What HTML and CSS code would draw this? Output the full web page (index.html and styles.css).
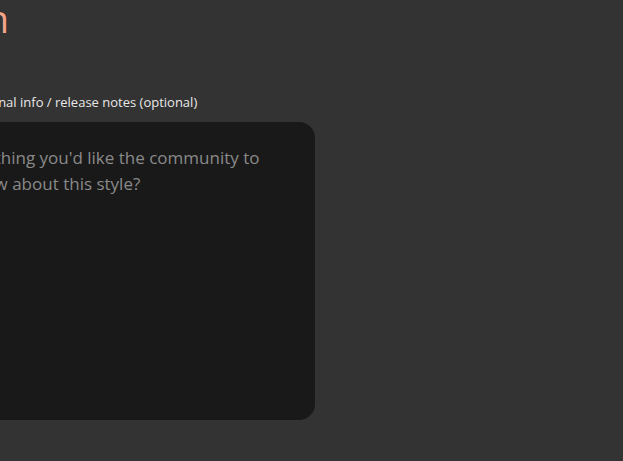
FILE: index.html
```html
<!DOCTYPE html>
<html>
<head>
<meta charset="utf-8">
<link rel="stylesheet" href="styles.css">
</head>
<body>
<main class="form">
  <div class="title-row">
    <h1 class="title">Description</h1>
  </div>
  <div class="field">
    <label class="label" for="notes">Additional info / release notes (optional)</label>
    <textarea id="notes" class="notes" placeholder="Anything you'd like the community to know about this style?"></textarea>
  </div>
</main>
</body>
</html>
```

FILE: styles.css
```css
html, body {
  margin: 0;
  padding: 0;
  background: #333333;
  height: 100%;
  overflow: hidden;
}
body {
  font-family: "Open Sans", "DejaVu Sans", sans-serif;
}
.form {
  display: flex;
  flex-direction: column;
  margin-left: -60px;
  width: 375px;
}
.title-row {
  display: flex;
  justify-content: flex-end;
  width: 69px;
  height: 36px;
}
.title {
  margin: 0;
  font-size: 38px;
  line-height: 36px;
  font-weight: 400;
  color: #f5a488;
  white-space: nowrap;
  flex: none;
}
.field {
  display: flex;
  flex-direction: column;
  margin-top: 56px;
}
.label {
  font-size: 13px;
  line-height: 20px;
  color: #e8e8e8;
  margin-left: 15px;
  margin-bottom: 10px;
  white-space: nowrap;
}
.notes {
  box-sizing: border-box;
  width: 375px;
  height: 298px;
  background: #191919;
  border: none;
  border-radius: 16px;
  padding: 23px 20px 22px 25px;
  font-family: "Open Sans", "DejaVu Sans", sans-serif;
  font-size: 17px;
  line-height: 26px;
  color: #ddd;
  resize: none;
  outline: none;
}
.notes::placeholder {
  color: #8a8a8a;
}
```
